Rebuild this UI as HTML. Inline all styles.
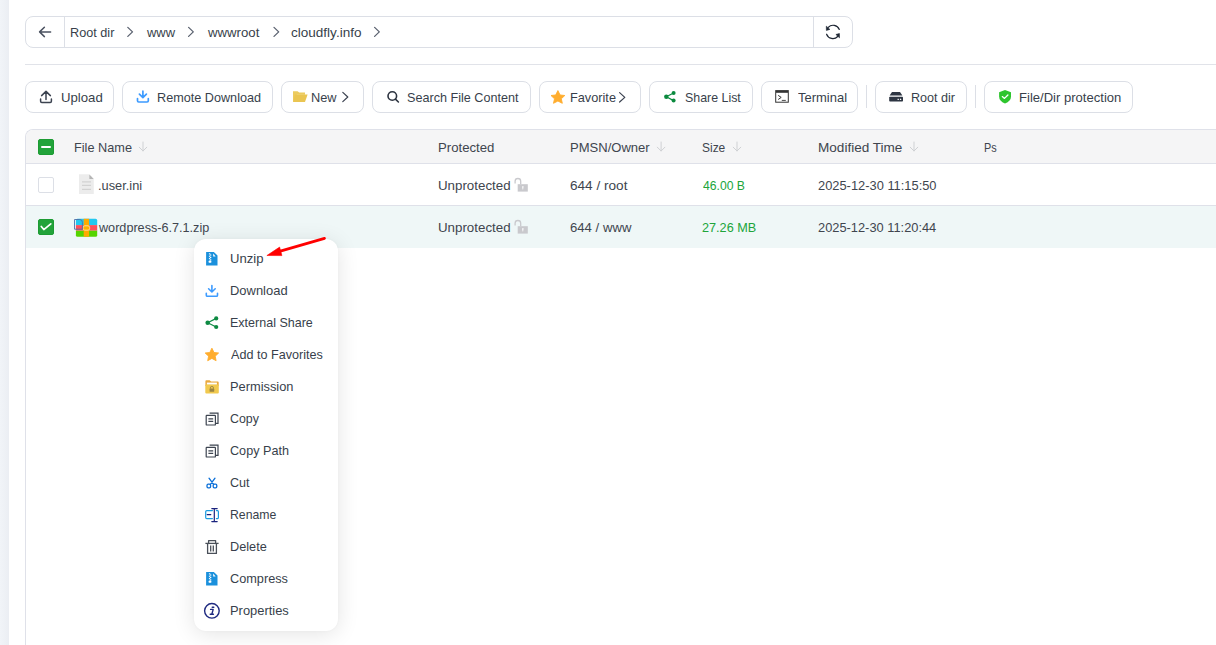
<!DOCTYPE html>
<html><head><meta charset="utf-8">
<style>
*{box-sizing:border-box;margin:0;padding:0}
html,body{width:1216px;height:645px;overflow:hidden;background:#fff;font-family:"Liberation Sans",sans-serif}
.a{position:absolute}
.t{position:absolute;white-space:nowrap;transform-origin:0 0;font-family:"Liberation Sans",sans-serif}
svg{position:absolute;overflow:visible}
.btn{position:absolute;top:81px;height:32px;border:1px solid #dcdfe6;border-radius:8px;background:#fff}
.sep{position:absolute;top:85px;width:1px;height:23px;background:#dcdfe6}
</style></head><body>
<div class="a" style="left:0;top:0;width:9px;height:645px;background:linear-gradient(to right,#f1f4f8,#ebeef3)"></div>

<!-- breadcrumb -->
<div class="a" style="left:25px;top:16px;width:828px;height:32px;border:1px solid #dcdfe6;border-radius:8px"></div>
<div class="a" style="left:64px;top:17px;width:1px;height:30px;background:#dcdfe6"></div>
<div class="a" style="left:813px;top:17px;width:1px;height:30px;background:#dcdfe6"></div>
<svg style="left:0;top:0" width="1" height="1">
  <g fill="none" stroke="#4b5260" stroke-width="1.5" stroke-linecap="round" stroke-linejoin="round">
    <path d="M44.4 27.2L39.6 31.9L44.4 36.6M39.8 31.9H50.6"/>
  </g>
  <g fill="none" stroke="#5b6270" stroke-width="1.3" stroke-linecap="round" stroke-linejoin="round">
    <path d="M127.8 27.4L132.5 31.9L127.8 36.4"/>
    <path d="M188.6 27.4L193.3 31.9L188.6 36.4"/>
    <path d="M274.0 27.4L278.7 31.9L274.0 36.4"/>
    <path d="M374.6 27.4L379.3 31.9L374.6 36.4"/>
  </g>
  <!-- refresh -->
  <g fill="none" stroke="#1e2633" stroke-width="1.2" stroke-linecap="round">
    <path d="M839.3 29.4A6.7 6.7 0 0 0 828.2 27.4"/>
    <path d="M826.6 34.2A6.7 6.7 0 0 0 837.7 36.5"/>
  </g>
  <path d="M826.3 26.2L826.4 30.4L829.9 29.4Z" fill="#1e2633" stroke="#1e2633" stroke-width="0.6" stroke-linejoin="round"/>
  <path d="M839.5 37.8L839.4 33.5L835.9 34.5Z" fill="#1e2633" stroke="#1e2633" stroke-width="0.6" stroke-linejoin="round"/>
</svg>

<div class="a" style="left:25px;top:64px;width:1191px;height:1px;background:#e1e3e9"></div>

<!-- toolbar -->
<div class="btn" style="left:25px;width:89px"></div>
<div class="btn" style="left:122px;width:151px"></div>
<div class="btn" style="left:281px;width:83px"></div>
<div class="btn" style="left:372px;width:159px"></div>
<div class="btn" style="left:539px;width:102px"></div>
<div class="btn" style="left:649px;width:104px"></div>
<div class="btn" style="left:761px;width:97px"></div>
<div class="sep" style="left:866px"></div>
<div class="btn" style="left:875px;width:92px"></div>
<div class="sep" style="left:975px"></div>
<div class="btn" style="left:984px;width:149px"></div>

<svg style="left:0;top:0" width="1" height="1">
  <!-- upload -->
  <g fill="none" stroke="#3c4350" stroke-width="1.5" stroke-linecap="round" stroke-linejoin="round">
    <path d="M46 91.6V99.4M41.6 95.6L46 91.4L50.4 95.6"/>
    <path d="M40.6 99V101.2Q40.6 102.4 41.8 102.4H50.2Q51.4 102.4 51.4 101.2V99"/>
  </g>
  <!-- remote download -->
  <g fill="none" stroke="#3d9bff" stroke-width="1.7" stroke-linecap="round" stroke-linejoin="round">
    <path d="M142.9 91.2V97.4M139.4 94.2L142.9 97.6L146.4 94.2"/>
    <path d="M137.5 98.6V100.8Q137.5 102 138.7 102H147.1Q148.3 102 148.3 100.8V98.6"/>
  </g>
  <!-- folder -->
  <path d="M293 91.2H297.6L299.2 92.6H305V94.8H296.8L293.6 101.9H293Z" fill="#eccb5f"/>
  <path d="M294.8 94.6H307.6L305 101.9H293.2Z" fill="#eac552"/>
  <!-- search -->
  <g fill="none" stroke="#2d3440" stroke-width="1.6" stroke-linecap="round">
    <circle cx="392.3" cy="96" r="4.3"/>
    <path d="M395.4 99.2L398.4 102"/>
  </g>
  <!-- chevrons New / Favorite -->
  <g fill="none" stroke="#3b4250" stroke-width="1.2" stroke-linecap="round" stroke-linejoin="round">
    <path d="M342.8 92.4L347.8 97L342.8 101.6"/>
    <path d="M619.6 92.6L624.8 97.4L619.6 102"/>
  </g>
  <!-- star -->
  <path d="M557.9 90.6L560.1 95.0L564.8 95.5L561.3 98.8L562.3 103.3L557.9 101.0L553.5 103.3L554.5 98.8L551.0 95.5L555.7 95.0Z" fill="#ffad2e" stroke="#ffad2e" stroke-width="0.9" stroke-linejoin="round"/>
  <!-- share -->
  <g fill="#0b8a3e">
    <circle cx="666.3" cy="96.7" r="2.2"/>
    <circle cx="673.6" cy="93.0" r="2.0"/>
    <circle cx="673.6" cy="100.6" r="2.0"/>
  </g>
  <path d="M666.3 96.7L673.6 93M666.3 96.7L673.6 100.6" stroke="#0b8a3e" stroke-width="1.2"/>
  <!-- terminal -->
  <rect x="775.7" y="90.6" width="12.6" height="11.6" fill="none" stroke="#333" stroke-width="1"/>
  <rect x="776" y="91" width="12" height="1.8" fill="#333"/>
  <path d="M778.2 95.4L781.2 97.4L778.2 99.5" fill="none" stroke="#333" stroke-width="1"/>
  <path d="M781.8 100.4H785.8" stroke="#333" stroke-width="0.9"/>
  <!-- hard drive -->
  <path d="M892 92.1H900L902.4 95.6H889.6Z" fill="#2d3542"/>
  <rect x="889.2" y="96.8" width="13.8" height="4.8" rx="0.8" fill="#2d3542"/>
  <path d="M898 98.3L899.2 100.1H897.4ZM900.4 98.3L901.6 100.1H899.8Z" fill="#fff"/>
  <!-- shield -->
  <path d="M1005 90L1011 92.2V96.6Q1011 101.2 1005 103.6Q999.1 101.2 999.1 96.6V92.2Z" fill="#2ec52e"/>
  <path d="M1002.3 96.6L1004.5 98.4L1007.9 95" fill="none" stroke="#fff" stroke-width="1.3" stroke-linecap="round" stroke-linejoin="round"/>
</svg>

<!-- table -->
<div class="a" style="left:25px;top:129px;width:1200px;height:530px;border-left:1px solid #dfe1e9;border-top:1px solid #dfe1e9;border-top-left-radius:8px;overflow:hidden">
  <div class="a" style="left:0;top:0;width:1200px;height:34px;background:#f5f5f6;border-bottom:1px solid #dfe1e9"></div>
  <div class="a" style="left:0;top:34px;width:1200px;height:42px;background:#fff;border-bottom:1px solid #dfe1e9"></div>
  <div class="a" style="left:0;top:76px;width:1200px;height:42px;background:#eff7f7"></div>
</div>
<!-- checkboxes -->
<div class="a" style="left:38px;top:139px;width:16px;height:16px;border-radius:2px;background:#22a33a;border:1px solid #1c9b33"></div>
<div class="a" style="left:41.3px;top:146.2px;width:9.4px;height:1.6px;background:#fff;border-radius:1px"></div>
<div class="a" style="left:38px;top:177px;width:16px;height:16px;border-radius:2px;background:#fff;border:1px solid #dcdfe6"></div>
<div class="a" style="left:38px;top:219px;width:16px;height:16px;border-radius:2px;background:#22a33a;border:1px solid #1c9b33"></div>
<svg style="left:0;top:0" width="1" height="1">
  <path d="M41.3 226.4L43.8 229.6L50.8 223.8" fill="none" stroke="#fff" stroke-width="1.7" stroke-linecap="round" stroke-linejoin="round"/>
  <!-- sort arrows -->
  <g fill="none" stroke="#cfd1d4" stroke-width="1" stroke-linecap="round" stroke-linejoin="round">
    <path d="M143 142V151M139.2 147.2L143 151L146.8 147.2"/>
    <path d="M661.1 142V151M657.3 147.2L661.1 151L664.9 147.2"/>
    <path d="M737 142V151M733.2 147.2L737 151L740.8 147.2"/>
    <path d="M914 142V151M910.2 147.2L914 151L917.8 147.2"/>
  </g>
  <!-- file icon -->
  <path d="M79 174.3H89.2L93.8 178.9V194H79Z" fill="#ececec"/>
  <path d="M89.4 174.6L93.7 178.9H89.4Z" fill="#b5b5b5"/>
  <g stroke="#d2d2d2" stroke-width="1.2">
    <path d="M82 181.9H91M82 185.4H91M82 189.3H91"/>
  </g>
  <!-- zip icon -->
  <clipPath id="zc"><rect x="75.9" y="218.8" width="21.3" height="18" rx="1.6"/></clipPath>
  <g clip-path="url(#zc)">
    <rect x="75" y="218" width="23" height="7.2" fill="#22c8f0"/>
    <rect x="75" y="225.1" width="23" height="5.6" fill="#ff4e5a"/>
    <rect x="75" y="230.7" width="23" height="7" fill="#55d400"/>
    <rect x="83.7" y="218" width="5.4" height="20" fill="#ffaa00"/>
  </g>
  <rect x="83.2" y="225.8" width="6.4" height="4.4" rx="1.6" fill="#ffb000" stroke="#ffe3a0" stroke-width="0.9"/>
  <path d="M74.5 219.5H79.8Q82.4 219.5 82.4 222.4V229.2H74.5Z" fill="none" stroke="#4c6fa8" stroke-width="0.9"/>
  <!-- locks -->
  <g>
    <path d="M515.1 183.4V181.3A2.8 2.8 0 0 1 520.7 181.3V184.3" fill="none" stroke="#c9c9cd" stroke-width="1.3"/>
    <rect x="517.7" y="184.2" width="10.1" height="7.4" fill="#c9c9cd"/>
    <path d="M522.1 186.2H523.6L523.1 189.6H522.6Z" fill="#fff"/>
    <path d="M515.1 225.4V223.3A2.8 2.8 0 0 1 520.7 223.3V226.3" fill="none" stroke="#c9c9cd" stroke-width="1.3"/>
    <rect x="517.7" y="226.2" width="10.1" height="7.4" fill="#c9c9cd"/>
    <path d="M522.1 228.2H523.6L523.1 231.6H522.6Z" fill="#fff"/>
  </g>
</svg>

<!-- menu -->
<div class="a" style="left:194px;top:239px;width:144px;height:392px;background:#fff;border-radius:12px;box-shadow:0 3px 22px rgba(0,0,0,0.11),0 0 3px rgba(0,0,0,0.03)"></div>
<svg style="left:0;top:0" width="1" height="1">
  <!-- unzip -->
  <path d="M206.1 252H213.8L217.5 255.6V265.6H206.1Z" fill="#1a90dc"/>
  <path d="M213.2 253.6L215.6 256.4H213.2Z" fill="#fff"/>
  <g fill="#fff"><rect x="208.9" y="253.3" width="1.4" height="1.1"/><rect x="209.9" y="254.5" width="1.4" height="1.1"/><rect x="208.9" y="255.7" width="1.4" height="1.1"/><rect x="209.9" y="256.9" width="1.4" height="1.1"/><rect x="208.9" y="258.1" width="1.4" height="1.1"/><rect x="209.9" y="259.3" width="1.4" height="1.1"/><rect x="208.7" y="260.6" width="2.6" height="2.2" rx="0.6"/></g>
  <!-- download -->
  <g fill="none" stroke="#3d9bff" stroke-width="1.6" stroke-linecap="round" stroke-linejoin="round">
    <path d="M211.9 285.6V291.8M208.6 288.8L211.9 292L215.2 288.8"/>
    <path d="M206.3 293.2V295.2Q206.3 296.3 207.4 296.3H216.4Q217.5 296.3 217.5 295.2V293.2"/>
  </g>
  <!-- share -->
  <g fill="#0e8a43">
    <circle cx="207.7" cy="322.7" r="2.3"/>
    <circle cx="216.2" cy="318.4" r="2.1"/>
    <circle cx="216.2" cy="327" r="2.1"/>
  </g>
  <path d="M207.7 322.7L216.2 318.4M207.7 322.7L216.2 327" stroke="#0e8a43" stroke-width="1.2"/>
  <!-- star -->
  <path d="M211.9 348.2L214.0 352.5L218.6 353.0L215.2 356.2L216.1 360.7L211.9 358.4L207.7 360.7L208.6 356.2L205.2 353.0L209.8 352.5Z" fill="#ffad2e" stroke="#ffad2e" stroke-width="0.9" stroke-linejoin="round"/>
  <!-- permission -->
  <path d="M205.4 381.2Q205.4 380.3 206.3 380.3H209.6L211.2 381.6H217.8Q218.7 381.6 218.7 382.5V386H205.4Z" fill="#e9a93e"/>
  <rect x="206.9" y="382.6" width="10" height="2.2" fill="#fff"/>
  <rect x="205.3" y="384.6" width="13.5" height="9" rx="1" fill="#f1c94e"/>
  <path d="M210.3 388.8V388A1.6 1.6 0 0 1 213.5 388V388.8" fill="none" stroke="#9a8443" stroke-width="0.9"/>
  <rect x="209.6" y="388.6" width="4.6" height="3.2" rx="0.6" fill="#9a8443"/>
  <!-- copy, copy path -->
  <g fill="none" stroke="#3d4450" stroke-width="1.2">
    <path d="M209.6 413.2H218V423.4H216"/>
    <rect x="206.2" y="415.4" width="9.2" height="9.6" rx="0.6"/>
    <path d="M208.4 418.9H213.2M208.4 421.3H213.2"/>
    <path d="M209.6 445.2H218V455.4H216"/>
    <rect x="206.2" y="447.4" width="9.2" height="9.6" rx="0.6"/>
    <path d="M208.4 450.9H213.2M208.4 453.3H213.2"/>
  </g>
  <!-- cut -->
  <g fill="none" stroke="#0a6fd8" stroke-width="1.3" stroke-linecap="round">
    <path d="M209 478.2L213.6 484.4M215 478.2L210.4 484.4"/>
    <rect x="207" y="484.2" width="3.6" height="3.6" rx="1.2"/>
    <rect x="213.2" y="484.2" width="3.6" height="3.6" rx="1.2"/>
  </g>
  <!-- rename -->
  <g fill="none" stroke="#1a9ae0" stroke-width="1.2" stroke-linecap="round">
    <path d="M212.4 510.6H206.8Q205.7 510.6 205.7 511.7V517.5Q205.7 518.6 206.8 518.6H212.4"/>
    <path d="M216.4 510.6H217.6Q218.4 510.6 218.4 511.7V517.5Q218.4 518.6 217.6 518.6H216.4"/>
  </g>
  <g fill="none" stroke="#1a237e" stroke-width="1.2" stroke-linecap="round">
    <path d="M207.2 514.6H210.8"/>
    <path d="M214.3 508.8V521.4M211.8 508.6H217.2M211.8 521.6H217.2"/>
  </g>
  <!-- delete -->
  <g fill="none" stroke="#4a5059" stroke-width="1.3" stroke-linejoin="round">
    <path d="M205.4 543.4H218.6"/>
    <path d="M208.6 543.4V540.6H215.6V543.4"/>
    <path d="M207.6 543.4V553.4H216.4V543.4"/>
    <path d="M210.7 545.4V551.6M213.3 545.4V551.6"/>
  </g>
  <!-- compress -->
  <path d="M206.1 572H213.8L217.5 575.6V585.6H206.1Z" fill="#1a90dc"/>
  <path d="M213.2 573.6L215.6 576.4H213.2Z" fill="#fff"/>
  <g fill="#fff"><rect x="208.9" y="573.3" width="1.4" height="1.1"/><rect x="209.9" y="574.5" width="1.4" height="1.1"/><rect x="208.9" y="575.7" width="1.4" height="1.1"/><rect x="209.9" y="576.9" width="1.4" height="1.1"/><rect x="208.9" y="578.1" width="1.4" height="1.1"/><rect x="209.9" y="579.3" width="1.4" height="1.1"/><rect x="208.7" y="580.6" width="2.6" height="2.2" rx="0.6"/></g>
  <!-- properties -->
  <circle cx="211.9" cy="610.8" r="7.3" fill="none" stroke="#1f2a80" stroke-width="1.4"/>
  <path d="M212.2 607.3H213.8" stroke="#1f2a80" stroke-width="1.4" stroke-linecap="round"/>
  <path d="M210.6 609.4H213.2L211.8 614.2H213.4M210.2 614.2H212" fill="none" stroke="#1f2a80" stroke-width="1.4" stroke-linecap="round" stroke-linejoin="round"/>
  <!-- red arrow -->
  <path d="M324.5 238.4L276 252.4" stroke="#ff0000" stroke-width="2.7" stroke-linecap="round"/>
  <path d="M266.9 255.5L279.6 247.1L281.9 255.6Z" fill="#ff0000" stroke="#ff0000" stroke-width="0.6" stroke-linejoin="round"/>
</svg>

<span class="t" style="left:69.51px;top:24.76px;font-size:12.8px;line-height:15px;color:#383f4b;transform:scaleX(0.9903)">Root dir</span>
<span class="t" style="left:146.60px;top:24.76px;font-size:12.8px;line-height:15px;color:#383f4b;transform:scaleX(1.0126)">www</span>
<span class="t" style="left:207.90px;top:24.76px;font-size:12.8px;line-height:15px;color:#383f4b;transform:scaleX(1.0312)">wwwroot</span>
<span class="t" style="left:291.27px;top:24.76px;font-size:12.8px;line-height:15px;color:#383f4b;transform:scaleX(1.0575)">cloudfly.info</span>
<span class="t" style="left:60.50px;top:89.86px;font-size:12.8px;line-height:15px;color:#383f4b;transform:scaleX(1.0289)">Upload</span>
<span class="t" style="left:157.21px;top:89.86px;font-size:12.8px;line-height:15px;color:#383f4b;transform:scaleX(0.9884)">Remote Download</span>
<span class="t" style="left:311.20px;top:89.86px;font-size:12.8px;line-height:15px;color:#383f4b;transform:scaleX(0.9990)">New</span>
<span class="t" style="left:407.41px;top:89.86px;font-size:12.8px;line-height:15px;color:#383f4b;transform:scaleX(0.9858)">Search File Content</span>
<span class="t" style="left:569.51px;top:89.86px;font-size:12.8px;line-height:15px;color:#383f4b;transform:scaleX(0.9944)">Favorite</span>
<span class="t" style="left:685.42px;top:89.86px;font-size:12.8px;line-height:15px;color:#383f4b;transform:scaleX(0.9681)">Share List</span>
<span class="t" style="left:797.85px;top:89.86px;font-size:12.8px;line-height:15px;color:#383f4b;transform:scaleX(1.0138)">Terminal</span>
<span class="t" style="left:910.72px;top:89.86px;font-size:12.8px;line-height:15px;color:#383f4b;transform:scaleX(0.9834)">Root dir</span>
<span class="t" style="left:1019.48px;top:89.86px;font-size:12.8px;line-height:15px;color:#383f4b;transform:scaleX(1.0203)">File/Dir protection</span>
<span class="t" style="left:73.52px;top:140.20px;font-size:13px;line-height:16px;color:#40454e;transform:scaleX(0.9784)">File Name</span>
<span class="t" style="left:437.59px;top:140.20px;font-size:13px;line-height:16px;color:#40454e;transform:scaleX(1.0135)">Protected</span>
<span class="t" style="left:569.60px;top:140.20px;font-size:13px;line-height:16px;color:#40454e;transform:scaleX(1.0032)">PMSN/Owner</span>
<span class="t" style="left:702.12px;top:140.20px;font-size:13px;line-height:16px;color:#40454e;transform:scaleX(0.9202)">Size</span>
<span class="t" style="left:817.96px;top:140.20px;font-size:13px;line-height:16px;color:#40454e;transform:scaleX(1.0431)">Modified Time</span>
<span class="t" style="left:983.86px;top:140.20px;font-size:13px;line-height:16px;color:#40454e;transform:scaleX(0.8364)">Ps</span>
<span class="t" style="left:98.09px;top:178.30px;font-size:13px;line-height:16px;color:#40454e;transform:scaleX(0.9843)">.user.ini</span>
<span class="t" style="left:437.58px;top:178.30px;font-size:13px;line-height:16px;color:#40454e;transform:scaleX(1.0246)">Unprotected</span>
<span class="t" style="left:570.15px;top:178.30px;font-size:13px;line-height:16px;color:#40454e;transform:scaleX(1.0452)">644 / root</span>
<span class="t" style="left:702.57px;top:178.30px;font-size:13px;line-height:16px;color:#20a53a;transform:scaleX(0.9364)">46.00 B</span>
<span class="t" style="left:817.98px;top:178.30px;font-size:13px;line-height:16px;color:#40454e;transform:scaleX(0.9897)">2025-12-30 11:15:50</span>
<span class="t" style="left:99.20px;top:220.30px;font-size:13px;line-height:16px;color:#40454e;transform:scaleX(0.9717)">wordpress-6.7.1.zip</span>
<span class="t" style="left:437.58px;top:220.30px;font-size:13px;line-height:16px;color:#40454e;transform:scaleX(1.0246)">Unprotected</span>
<span class="t" style="left:570.17px;top:220.30px;font-size:13px;line-height:16px;color:#40454e;transform:scaleX(1.0112)">644 / www</span>
<span class="t" style="left:702.19px;top:220.30px;font-size:13px;line-height:16px;color:#20a53a;transform:scaleX(0.9747)">27.26 MB</span>
<span class="t" style="left:817.98px;top:220.30px;font-size:13px;line-height:16px;color:#40454e;transform:scaleX(0.9876)">2025-12-30 11:20:44</span>
<span class="t" style="left:229.80px;top:251.06px;font-size:12.8px;line-height:15px;color:#383f4b;transform:scaleX(1.0231)">Unzip</span>
<span class="t" style="left:229.69px;top:283.06px;font-size:12.8px;line-height:15px;color:#383f4b;transform:scaleX(1.0122)">Download</span>
<span class="t" style="left:229.72px;top:315.06px;font-size:12.8px;line-height:15px;color:#383f4b;transform:scaleX(0.9780)">External Share</span>
<span class="t" style="left:230.70px;top:347.06px;font-size:12.8px;line-height:15px;color:#383f4b;transform:scaleX(0.9854)">Add to Favorites</span>
<span class="t" style="left:229.70px;top:379.06px;font-size:12.8px;line-height:15px;color:#383f4b;transform:scaleX(1.0033)">Permission</span>
<span class="t" style="left:230.10px;top:411.06px;font-size:12.8px;line-height:15px;color:#383f4b;transform:scaleX(0.9675)">Copy</span>
<span class="t" style="left:230.08px;top:443.06px;font-size:12.8px;line-height:15px;color:#383f4b;transform:scaleX(0.9867)">Copy Path</span>
<span class="t" style="left:230.09px;top:475.06px;font-size:12.8px;line-height:15px;color:#383f4b;transform:scaleX(0.9818)">Cut</span>
<span class="t" style="left:229.74px;top:507.06px;font-size:12.8px;line-height:15px;color:#383f4b;transform:scaleX(0.9579)">Rename</span>
<span class="t" style="left:229.71px;top:539.06px;font-size:12.8px;line-height:15px;color:#383f4b;transform:scaleX(0.9944)">Delete</span>
<span class="t" style="left:230.08px;top:571.06px;font-size:12.8px;line-height:15px;color:#383f4b;transform:scaleX(0.9939)">Compress</span>
<span class="t" style="left:229.69px;top:603.06px;font-size:12.8px;line-height:15px;color:#383f4b;transform:scaleX(1.0075)">Properties</span>
</body></html>
